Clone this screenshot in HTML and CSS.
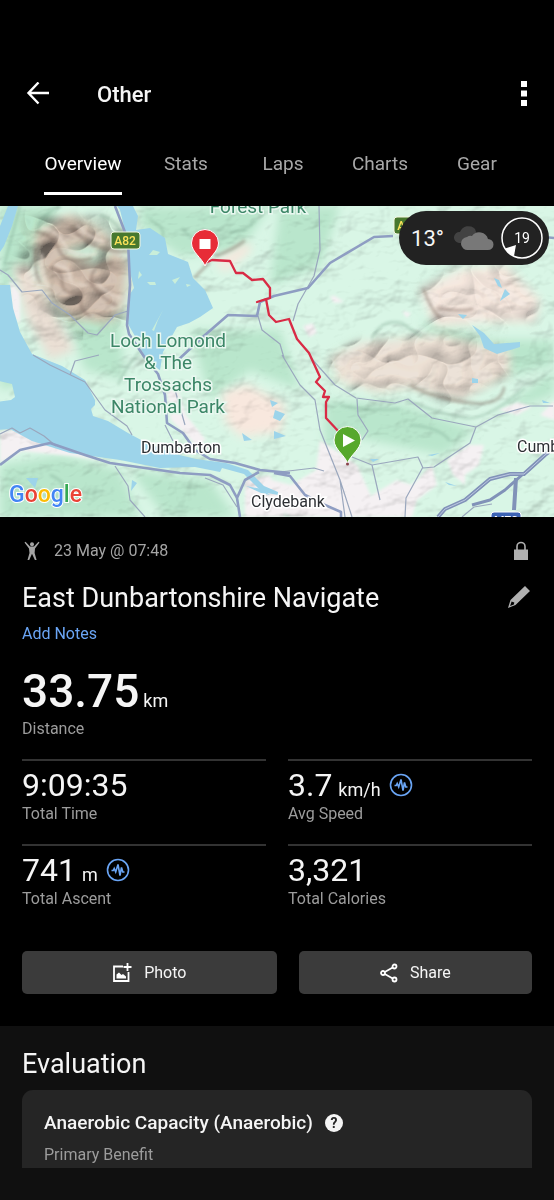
FILE: index.html
```html
<!DOCTYPE html>
<html lang="en">
  <head>
    <meta charset="UTF-8" />
    <meta name="viewport" content="width=device-width, initial-scale=1" />
    <title>East Dunbartonshire Navigate</title>
    <link rel="stylesheet" href="styles.css">
  </head>
  <body>
    <!-- Top bar -->
    <header class="topbar">
      <button class="icon-btn" type="button" aria-label="Back">
        <svg width="24" height="24" viewBox="0 0 24 24" fill="none" stroke="#fff" stroke-width="2.4"><path d="M23 11H3M12.500.5 2.500 11l10 10.500" /></svg>
      </button>
      <h1 class="topbar-title">Other</h1>
      <button class="icon-btn" type="button" aria-label="More options">
        <svg width="6" height="26" viewBox="0 0 6 26" fill="#fff"><path d="M0 0h6v6H0zM0 9.500h6v6H0zM0 19h6v6H0z" /></svg>
      </button>
    </header>

    <nav class="tabs">
      <a class="tab active" href="#overview"><span>Overview</span></a>
      <a class="tab" href="#stats"><span>Stats</span></a>
      <a class="tab" href="#laps"><span>Laps</span></a>
      <a class="tab" href="#charts"><span>Charts</span></a>
      <a class="tab" href="#gear"><span>Gear</span></a>
    </nav>

    <!-- Route map -->
    <section class="map">
      <svg class="map-canvas" viewBox="0 206 554 311" preserveAspectRatio="xMidYMid slice">
        <defs>
          <filter id="relief" x="0" y="0" width="100%" height="100%">
            <feTurbulence type="fractalNoise" baseFrequency="0.022 0.03" numOctaves="4" seed="8" />
            <feDiffuseLighting surfaceScale="9" diffuseConstant="1.2" lighting-color="#fff">
              <feDistantLight azimuth="235" elevation="58" />
            </feDiffuseLighting>
          </filter>
          <filter id="rock" x="0" y="0" width="100%" height="100%">
            <feTurbulence type="turbulence" baseFrequency="0.018 0.022" numOctaves="2" seed="21" />
            <feDiffuseLighting surfaceScale="22" diffuseConstant="1.250" lighting-color="#fff6ee">
              <feDistantLight azimuth="225" elevation="55" />
            </feDiffuseLighting>
          </filter>
          <filter id="soft" x="-30%" y="-30%" width="160%" height="160%"><feGaussianBlur stdDeviation="5" /></filter>
          <filter id="ridge" x="-20%" y="-20%" width="140%" height="140%"><feGaussianBlur stdDeviation="1.4" /></filter>
          <mask id="hills">
            <g filter="url(#soft)">
              <path fill="#fff" d="M20 215h105l5 60-5 50-50 10-55-45z" />
              <path fill="#aaa" d="M325 358l30-18 80-8 75 15 0 28-55 28-50-13-30 5-45-10z" />
              <path fill="#777" d="M415 290l40-25 50-5 35 35-5 30-100 8z" />
            </g>
          </mask>
        </defs>

        <rect y="206" width="554" height="311" fill="#d9f6e6" />

        <!-- forest -->
        <g fill="#b9e6cc" filter="url(#soft)">
          <path d="M0 206h60l-30 60-30 30zM140 206h130l-30 45-60 5-40-30zM0 340l40 40-40 10zM0 465l60-10 60 15 20 47H0zM60 300l60 20 5 60-40-10zM280 206h60l-20 60-50 20zM190 330l90 0 20 60-50-20-40 30z" />
          <path d="M325 400l80 5 70 25 79-60v25l-60 20-50 40-100-20-20 20zM130 470l80 10 25 37h-70zM420 320l70 20 64 0v25l-80 20z" />
        </g>

        <!-- moor and rock -->
        <g filter="url(#soft)">
          <path d="M33 236l35-22 20 8 20 14 20 28-4 40-15 18-40-3-24-30z" fill="#d3c2b4" />
          <path d="M60 250l25-6 30 8-20 14z" fill="#c9ead6" />
          <path d="M12 265l18 0 25 50 20 35-25 10-25-45z" fill="#eadfd4" />
          <path d="M330 358l30-15 80-8 70 15 0 25-50 25-50-13-30 5-40-10z" fill="#ece2d8" />
          <path d="M420 290l40-20 45-5 35 35-5 22-50 0-50 4z" fill="#f5e9e1" />
          <path d="M222 392l25-8 38 20-4 28-40 5-16-15zM215 262l32-20 5 8-27 22z" fill="#f8e8de" />
        </g>

        <!-- built-up areas -->
        <g fill="#f5f1f3" filter="url(#ridge)">
          <path d="M320 440l15 10 22 15 10 22 14 30h-90l-40-22 10-18 30 8 25-15zM372 495l25-15 15 5 20-20 5 20-20 15-5 17h-40zM447 460l22-15 15 0-5 20-14 10 0 10-12-10zM0 432l30-5 22 16 50 18-30-5-50-5-22 12zM10 280l10 14 0 30-8-10zM166 385l12 5 8 25 20 25-10 5-25-25zM498 410l20-8 14 5-15 8zM555 400v20l-15-5zM245 480l25-5 15 42h-40z" />
          <path d="M330 296l5 0 9 6-10 1zM303 326l10-3 4 10-8 4zM402 311l9 2-4 5z" />
        </g>

        <rect class="relief" y="206" width="554" height="311" filter="url(#relief)" />
        <g class="rock" mask="url(#hills)"><rect y="206" width="554" height="311" filter="url(#rock)" /></g>

        <!-- ridges: dark side then lit side -->
        <g fill="none" stroke="#7d695f" stroke-width="3" stroke-linecap="round" filter="url(#ridge)" opacity=".45">
          <path d="M37 232q15 2 22 18t32 8M72 228q12 15 30 20t26 3M36 250q-3 20 4 32M50 268q12 0 12 14t20 10q-5 18 8 24M92 285q-4-20 20-22M92 285q10 14 24 20" />
          <path d="M195 277l14-14M216 256q20-8 28-15M412 386q16 10 52 16t40-14M438 308q24 4 34 1M424 290q6 18 16 28" />
        </g>
        <g fill="none" stroke="#f3e7dc" stroke-width="3" stroke-linecap="round" filter="url(#ridge)" opacity=".5">
          <path d="M42 228q15 2 22 16t32 10M78 226q12 12 26 16M42 255q-2 15 6 32M56 265q14 2 14 12t16 8M98 284q10 10 22 14M416 382q20 10 48 12M444 304q20 2 30 0" />
        </g>
        <g fill="none" stroke="#76a08a" stroke-width="2" filter="url(#ridge)" opacity=".45">
          <path d="M118 385q8-20 26-38M150 220q20 10 10 20M230 232q16 0 26-12M182 228q10 14 24 10M372 338q10-20 30-15l20 14M20 206l-16 60M60 206q-20 10-22 22M410 425q30 2 40 16" />
          <path d="M405 400q40 15 60 18t60-30M340 405q20 6 60 4M50 475q20 8 10 20M100 215q16 4 22 20M10 395q20-14 22-30" />
        </g>

        <!-- water -->
        <g fill="#9dd4ea">
          <path d="M8 206h10l-6 20-8 20-4 6v-26zM0 285h10l3 23 7 24 12 22 30 12 23 14 10 20 0 5-4 4 2 7 15 5 20 12 15 8 28 12 25 6 30 4 22 7 16 16 14 6v3l-16-3-18-18-22-6-2 4-25-5-35 1-40-8-50-7-38-12-22-12-12 1-10 6-8-6-9 8v-35h17l23-3 4-3-3-13-13-3-18-22-10-33z" />
          <path d="M117 206h16l5 10-2 14 14-2 15 10 3 16 15 6 5 2 5 16 12 12 8 18-13 9-11 6-12 4-14 25-3 18-12-6-12-26-8-14 2-30 4-6-4-16-2-30-8-32z" />
          <path d="M472 325l12 8 10 11 26-2 0 5-23 7-13-6-4-12zM494 278l5 2 3 8-4-2zM505 289l5 5-10 7zM458 314l9 1-4 4zM26 478l12 0-3 10zM132 480l5 3-6 8zM270 400l8 3-6 4zM275 410l10 4-5 7-7-3zM242 433l10 7-8 1zM246 486l16 3 8 6-9-2zM472 378l6 1v4h-6zM445 482l12 4-8-1zM542 400l8 3-7 0zM274 431l12 5-12 3zM370 459l9 0-6 3zM428 455l12-2-8 3z" />
        </g>
        <!-- islands -->
        <g fill="#c9eeda">
          <path d="M149 255l4-5 7 2-3 3zM139 271l3 4-4 4zM147 282l8 0 1 3-6 0zM172 280l8-3-5 7zM186 284l5 1-4 2zM152 330l11-20-5 10-4 11z" />
        </g>

        <!-- minor roads -->
        <g fill="none" stroke="#9aa7bd" stroke-width="1.200" stroke-linejoin="round">
          <path d="M319 206l1 44-6 26-16 28-5 17M0 270l8 5 14 17 20-2 10 13 18 12 18 18 9 2 18-20 13-4M33 355l17 10 35 17 20 28 22 16 5 9M70 375l5-14 24-6M115 466l13 20 2 14 15 17M282 355l18 30 15 15 5 30 20 50 5 37M311 358l24 27 21 13 39 5 13-4 24 19 44 9 22-12 32-9h23M476 427l-6 16-36 24-11 1-5-11-46 8-20-8M372 465l8 35M357 399l1 16 10 16-6 9M423 467l-17 31-1 19M258 316l4 14 18 14 4 14M0 434l12-6 8 5 10-5 14 8 12 10M165 425l8 16M185 425l-10-35M205 478l18 7 14 22M340 480l12 37M280 472l34-4 10 3M462 517l12-10 18-3" />
        </g>
        <!-- main roads -->
        <g fill="none" stroke="#8e9dc2" stroke-width="2.600" stroke-linejoin="round">
          <path d="M115 206l13 34 2 45-3 40 2 9 16 24 13 16 7 21 2 28 16 10 12 17 15 9 25 4 25 7 30 3M178 360l27-25 23-20 29 1 3-14 14-6 34-8 22-25 44-26 19-1M544 237l10 1M0 465l20-15 30-7 35 12 25 8 70 10 30 2 20 10 7 13 3 19M237 498l8-18 14-8M274 473l16 3 15 19 20 10 16 7v5" />
        </g>
        <g fill="none" stroke="#8192b8" stroke-width="4" stroke-linejoin="round">
          <path d="M438 517l7-8 20-9 25-21 20-5h14l21-19 9-7M516 478l-2 32" />
          <path d="M472 505l18-5 15-10 17-15" stroke-width="3" />
          <path d="M438 517l7-8 20-9 25-21 20-5h14l21-19 9-7" stroke="#bcc9e2" stroke-width="1" />
        </g>

        <!-- road shields -->
        <g font-size="12" font-weight="500" text-anchor="middle" fill="#fbe25a">
          <rect x="111" y="232" width="29" height="17" rx="3" fill="#47782e" stroke="#f3f6df" />
          <text x="125" y="245">A82</text>
          <rect x="394" y="217" width="29" height="17" rx="3" fill="#47782e" stroke="#f3f6df" />
          <text x="408" y="230">A81</text>
          <rect x="491" y="512" width="30" height="17" rx="3" fill="#3c63b4" stroke="#fff" />
          <text x="506" y="525" fill="#fff">M73</text>
        </g>

        <!-- place names -->
        <g class="park-label">
          <text x="258" y="213">Forest Park</text>
          <text x="168" y="347">Loch Lomond</text>
          <text x="168" y="369">&amp; The</text>
          <text x="168" y="391">Trossachs</text>
          <text x="168" y="413">National Park</text>
        </g>
        <g class="town-label">
          <text x="141" y="453">Dumbarton</text>
          <text x="251" y="507">Clydebank</text>
          <text x="517" y="452">Cumbernauld</text>
        </g>
        <text class="google" x="9" y="502"><tspan fill="#4285f4">G</tspan><tspan fill="#ea4335">o</tspan><tspan fill="#fbbc05">o</tspan><tspan fill="#4285f4">g</tspan><tspan fill="#34a853">l</tspan><tspan fill="#ea4335">e</tspan></text>

        <!-- track -->
        <path d="M205 263l7-3 18 1 6 12h7l9 7 11-1 7 9v10l-13 4 9-3 3 16 7 7 13-3 8 20 12 14 11 24-4 5 9 9-2 6h6l-3 5v16l14 15" fill="none" stroke="#d92b45" stroke-width="2.300" stroke-linejoin="round" />

        <!-- finish and start pins -->
        <path d="M205 266c-3-8-13.500-14-13.500-23a13.500 13.500 0 0 1 27 0c0 9-10.500 15-13.500 23z" fill="#e72c37" stroke="#fff" />
        <path d="M199.500 239h11v10h-11z" fill="#fff" />
        <path d="M347.500 463c-3-8-13.500-14-13.500-23a13.500 13.500 0 0 1 27 0c0 9-10.500 15-13.500 23z" fill="#57a82c" stroke="#fff" />
        <path d="M343 434v13l12-6.500z" fill="#fff" />
        <circle cx="347.500" cy="464" r="1.500" fill="#884149" />
      </svg>

      <!-- Weather badge -->
      <div class="weather">
        <span class="weather-temp">13°</span>
        <svg width="42" height="26" viewBox="0 0 42 26">
          <path d="M6 18a5.500 5.500 0 0 1 1-11 9 9 0 0 1 15-3l5 14z" fill="#424242" />
          <path d="M15 25a6.500 6.500 0 0 1-1-13 6 6 0 0 1 5-1 9 9 0 0 1 16 3 5.500 5.500 0 0 1 0 11z" fill="#787878" />
        </svg>
        <svg width="44" height="44" viewBox="0 0 44 44">
          <circle cx="22" cy="22" r="20" fill="none" stroke="#fff" stroke-width="1.500" />
          <path d="M5 32.500 16 29l-2 11q-6-3-9-7.500z" fill="#fff" />
          <text x="22" y="27" font-size="14" text-anchor="middle" fill="#fff">19</text>
        </svg>
      </div>
    </section>

    <!-- Activity summary -->
    <main class="summary">
      <div class="meta">
        <svg width="20" height="20" viewBox="0 0 20 20" fill="#a5a5a5">
          <circle cx="10" cy="3.200" r="2" />
          <path d="M3.500.8 8 5.500h4L16.500.8l1 .8L13 7.500l-.4 4.500 2 7h-1.700L10 12.800 7.200 19H5.500l2-7L7 7.500 2.500 1.600z" />
        </svg>
        <span class="meta-date">23 May @ 07:48</span>
        <svg width="16" height="20" viewBox="0 0 16 20"><path d="M4 9V5.500a4 4 0 0 1 8 0V9" fill="none" stroke="#b0b0b0" stroke-width="1.600" /><path d="M1 8.500h14V19H1z" fill="#b0b0b0" /></svg>
      </div>
      <div class="title-row">
        <h2>East Dunbartonshire Navigate</h2>
        <button class="icon-btn" type="button" aria-label="Edit name">
          <svg width="24" height="24" viewBox="0 0 24 24"><path fill="#b0b0b0" fill-rule="evenodd" d="M18 0l5 5L8.500 19 1 22l2.500-8zM4.600 15.500 3.100 20l3.800-1.500.4-2z" /></svg>
        </button>
      </div>
      <a class="add-notes" href="#notes">Add Notes</a>

      <div class="distance"><strong>33.75</strong> <span class="unit">km</span></div>
      <div class="label">Distance</div>

      <div class="stats">
        <div class="stat">
          <div class="value">9:09:35</div>
          <div class="label">Total Time</div>
        </div>
        <div class="stat">
          <div class="value">
            <div>3.7 <span class="unit">km/h</span></div>
            <svg class="pulse" width="24" height="24" viewBox="0 0 24 24"><circle cx="12" cy="12" r="10.500" /><path d="M5.500 12.500h1.700l1-2 1.500 3.500 2.300-7.500 2 11 1.500-8 1.300 4.500h1.700" /></svg>
          </div>
          <div class="label">Avg Speed</div>
        </div>
        <div class="stat">
          <div class="value">
            <div>741 <span class="unit">m</span></div>
            <svg class="pulse" width="24" height="24" viewBox="0 0 24 24"><circle cx="12" cy="12" r="10.500" /><path d="M5.500 12.500h1.700l1-2 1.500 3.500 2.300-7.500 2 11 1.500-8 1.300 4.500h1.700" /></svg>
          </div>
          <div class="label">Total Ascent</div>
        </div>
        <div class="stat">
          <div class="value">3,321</div>
          <div class="label">Total Calories</div>
        </div>
      </div>

      <div class="actions">
        <button class="action" type="button">
          <svg width="20" height="20" viewBox="0 0 20 20"><path d="M11 3.500H2V18h14.500V9M15.500 0v8M11.500 4h8" fill="none" stroke="#fff" stroke-width="1.800" /><path d="M4.500 15.500v-4l2.500-2 2.500 2.500 1.500-1 3 2.500v2z" fill="#fff" /></svg>
          Photo
        </button>
        <button class="action" type="button">
          <svg width="18" height="20" viewBox="0 0 18 20" fill="none" stroke="#fff" stroke-width="1.800"><circle cx="3" cy="10" r="2" /><circle cx="14.500" cy="3.500" r="2" /><circle cx="14.500" cy="16.500" r="2" /><path d="M4.800 9l7.900-4.500M4.800 11l7.900 4.500" /></svg>
          Share
        </button>
      </div>
    </main>

    <!-- Evaluation -->
    <section class="evaluation">
      <h2>Evaluation</h2>
      <div class="card">
        <div class="card-title">
          <h3>Anaerobic Capacity (Anaerobic)</h3>
          <button class="help" type="button" aria-label="About anaerobic capacity">?</button>
        </div>
        <div class="label">Primary Benefit</div>
      </div>
    </section>
  </body>
</html>
```
FILE: styles.css
```css
* {
  box-sizing: border-box;
}
body {
  margin: 0;
  min-height: 100vh;
  display: flex;
  flex-direction: column;
  background: #000;
  color: #f5f5f5;
  font-family: Roboto, sans-serif;
  font-size: 16px;
}
h1,
h2,
h3 {
  margin: 0;
}
h2 {
  font-size: 27px;
  line-height: 32px;
  font-weight: 400;
}
svg {
  display: block;
  flex: none;
}
.icon-btn {
  padding: 0;
  border: 0;
  background: none;
}

/* top bar */
.topbar {
  display: flex;
  align-items: center;
  padding: 64px 27px 0 26px;
  height: 124px;
}
.topbar-title {
  flex: 1;
  margin-left: 47px;
  font-size: 22px;
  font-weight: 500;
}
.tabs {
  display: flex;
  justify-content: center;
  padding: 16px 0 11px;
}
.tab {
  min-width: 97px;
  padding: 0 16px;
  text-align: center;
  color: #a8a8a8;
  font-size: 19px;
  line-height: 48px;
  text-decoration: none;
}
.tab span {
  display: inline-block;
  padding: 0 0 4px;
  border-bottom: 3px solid transparent;
}
.tab.active span {
  color: #fff;
  border-color: #fff;
}

/* map */
.map {
  position: relative;
}
.map-canvas {
  width: 100%;
  height: auto;
}
.relief {
  mix-blend-mode: multiply;
  opacity: .35;
}
.rock {
  mix-blend-mode: multiply;
  opacity: .5;
}
.park-label {
  font-size: 19px;
  text-anchor: middle;
  fill: #3c8667;
  stroke: #e9f8f0;
  stroke-width: 3px;
  paint-order: stroke;
}
.town-label {
  font-size: 16px;
  fill: #2c2f33;
  stroke: #fff;
  stroke-width: 3px;
  paint-order: stroke;
}
.google {
  font-size: 23px;
  font-weight: 500;
  stroke: #fff;
  stroke-width: 2px;
  paint-order: stroke;
}
.weather {
  position: absolute;
  top: 5px;
  right: 5px;
  height: 54px;
  display: flex;
  align-items: center;
  gap: 5px;
  padding: 0 5px 0 12px;
  border-radius: 27px;
  background: #222;
}
.weather-temp {
  margin-right: 4px;
  font-size: 22px;
}

/* summary */
.summary {
  padding: 23px 22px 32px;
}
.meta {
  display: flex;
  align-items: center;
  gap: 12px;
  padding-right: 3px;
  line-height: 22px;
}
.meta-date {
  flex: 1;
  color: #a5a5a5;
}
.title-row {
  display: flex;
  align-items: center;
  justify-content: space-between;
  padding: 20px 1px 0 0;
}
.add-notes {
  display: inline-block;
  margin-top: 10px;
  line-height: 20px;
  color: #6aa5f5;
  text-decoration: none;
}
.distance {
  margin-top: 30px;
  line-height: 34px;
}
.distance strong {
  font-size: 46px;
  font-weight: 500;
}
.unit {
  font-size: 18px;
  line-height: 18px;
}
.label {
  color: #9c9c9c;
  font-size: 16px;
  line-height: 20px;
}
.stats {
  display: grid;
  grid-template-columns: 1fr 1fr;
  column-gap: 22px;
  margin-top: 20px;
}
.stat {
  height: 85px;
  padding-top: 5px;
  border-top: 2px solid #333;
}
.value {
  display: flex;
  align-items: center;
  gap: 8px;
  height: 38px;
  font-size: 32px;
  line-height: 38px;
}
.value .unit {
  margin-left: -2px;
}
.pulse {
  fill: none;
  stroke: #6aa5f5;
  stroke-width: 1.6px;
}
.actions {
  display: grid;
  grid-template-columns: 12fr 11fr;
  gap: 22px;
  margin-top: 22px;
}
.action {
  display: flex;
  align-items: center;
  justify-content: center;
  gap: 12px;
  height: 43px;
  border: 0;
  border-radius: 5px;
  background: #3b3b3b;
  color: #f5f5f5;
  font: 16px Roboto, sans-serif;
}

/* evaluation */
.evaluation {
  flex: 1;
  padding: 22px 22px 32px;
  background: #101010;
}
.card {
  margin-top: 10px;
  padding: 21px 22px 3px;
  border-radius: 11px 11px 0 0;
  background: #252525;
}
.card-title {
  display: flex;
  align-items: center;
  gap: 12px;
  margin-bottom: 10px;
}
.card h3 {
  font-size: 19px;
  line-height: 24px;
  font-weight: 500;
}
.help {
  width: 18px;
  height: 18px;
  padding: 0;
  border: 0;
  border-radius: 50%;
  background: #f5f5f5;
  color: #252525;
  font: 700 14px/18px Roboto, sans-serif;
}
```
